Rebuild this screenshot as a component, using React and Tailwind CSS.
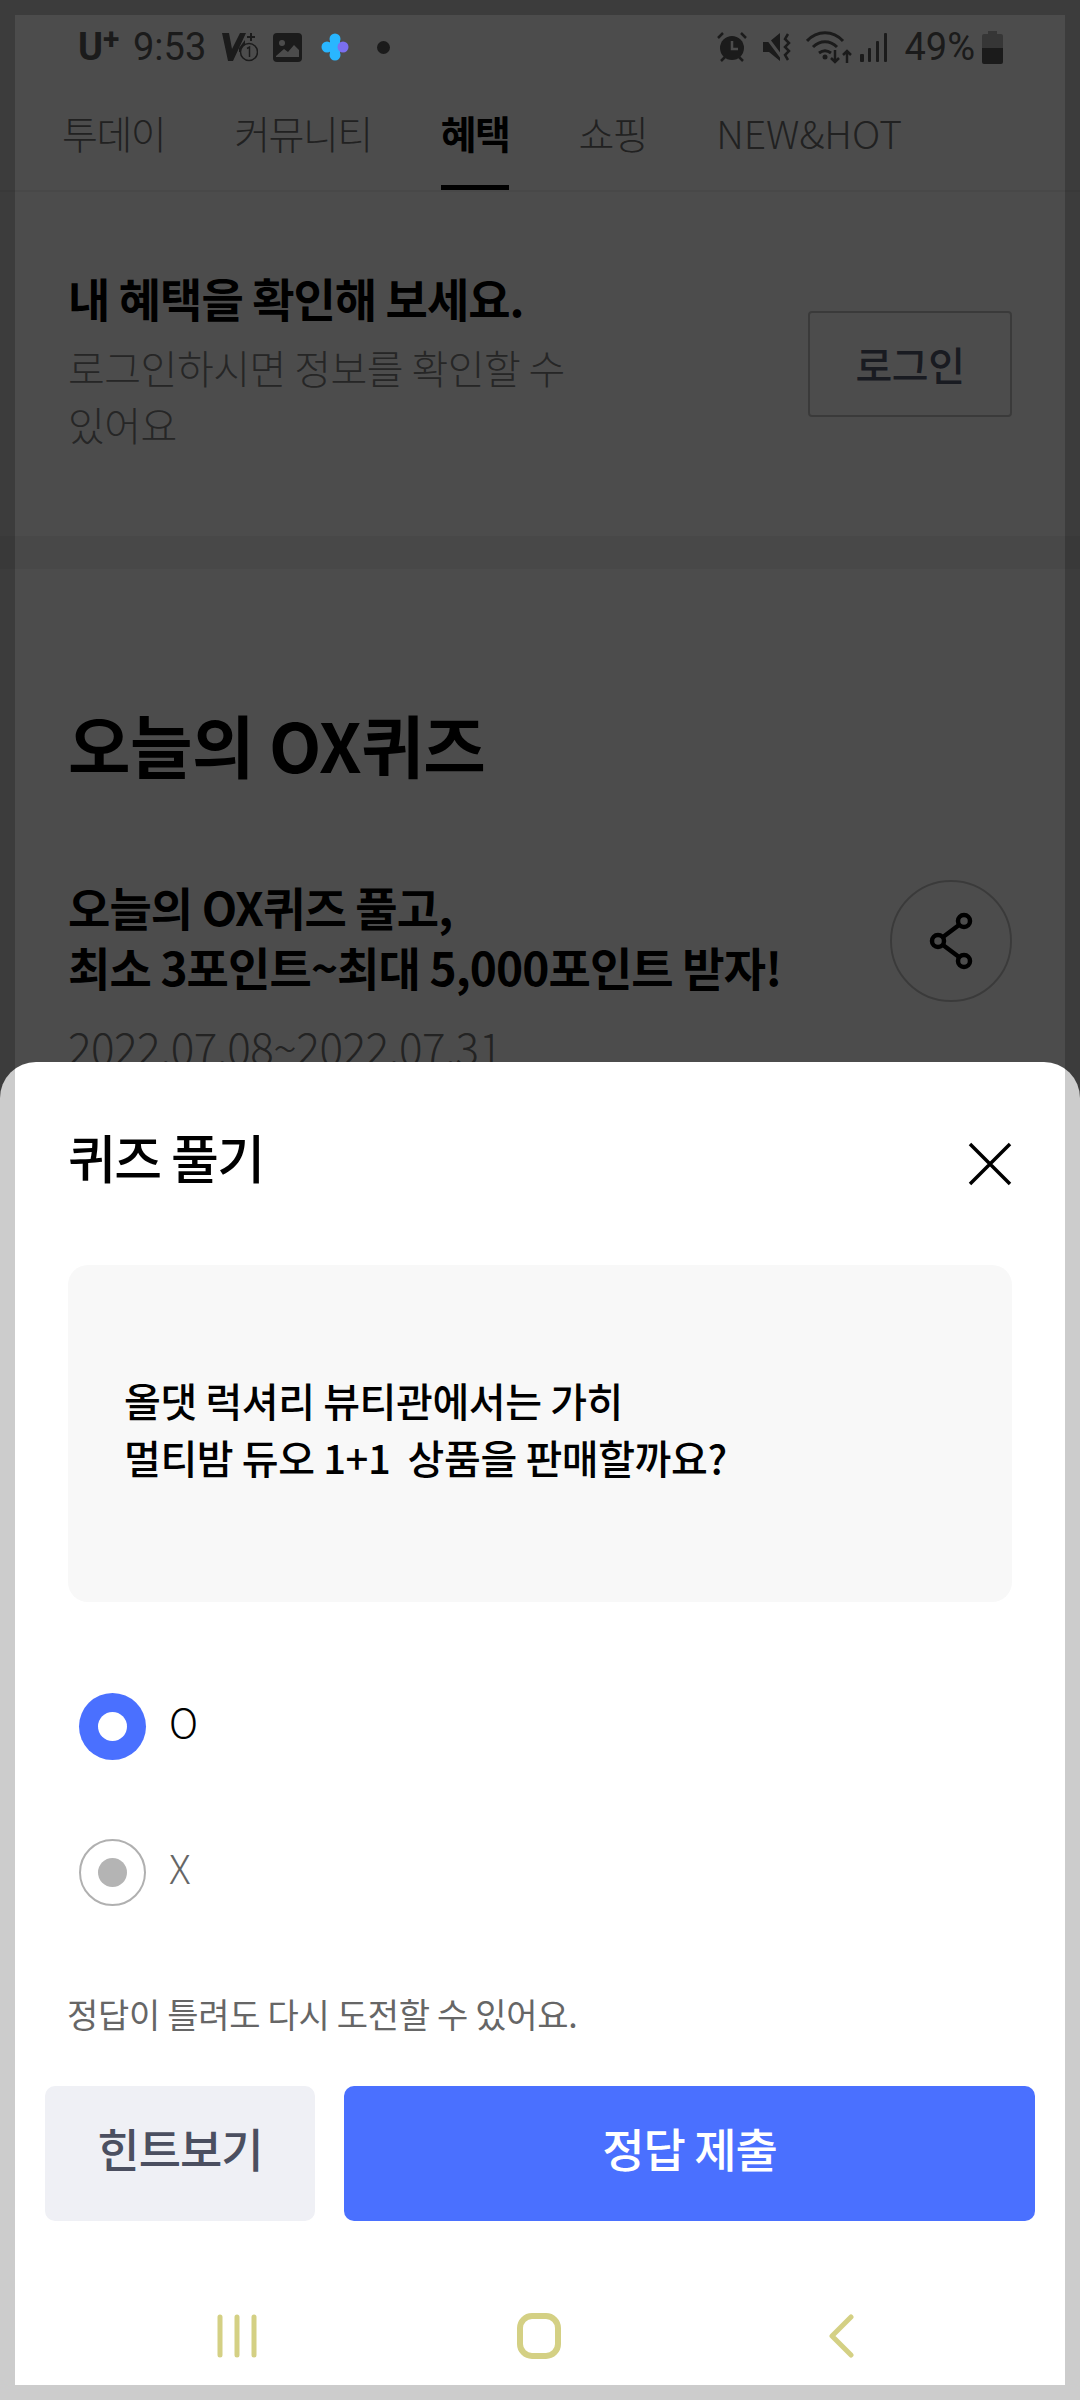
const TABS = [
  { label: "투데이" },
  { label: "커뮤니티" },
  { label: "혜택", active: true },
  { label: "쇼핑" },
  { label: "NEW&HOT", latin: true },
];

function tabClass(tab) {
  if (tab.active) return "h-[96px] pb-[15px] flex items-center border-b-[5px] border-black text-black font-bold text-[39px] tracking-[-1.5px]";
  if (tab.latin) return "h-[96px] pb-[15px] flex items-center border-b-[5px] border-transparent text-[#707070] font-light text-[39px] tracking-[-0.1px]";
  return "h-[96px] pb-[15px] flex items-center border-b-[5px] border-transparent text-[#707070] font-light text-[39px] tracking-[-1.5px]";
}

function StatusBar() {
  return (
    <div className="h-[94px] flex items-center text-[#5a5a5a] font-['Roboto',sans-serif]">
      <div className="w-[133px] pl-[78px] flex items-start font-bold text-[38px] leading-none">
        U<span className="text-[30px] leading-none -mt-[4px]">+</span>
      </div>
      <span className="w-[89px] text-[38px] leading-none">9:53</span>
      <svg className="w-[36px] h-[30px]" viewBox="0 0 36 30" fill="none">
        <path d="M0 1h7l3 16L18 1h6L11 29H6z" fill="#5a5a5a" />
        <path d="M17 16l6-8v6l-3 6h-3z" fill="#5a5a5a" />
        <path d="M29 1v8M25 5h8" stroke="#5a5a5a" strokeWidth="2" />
        <circle cx="27" cy="20" r="8.5" fill="#fff" stroke="#5a5a5a" strokeWidth="1.5" />
        <path d="M25 16.5l2.5-1.5v10" stroke="#5a5a5a" strokeWidth="1.5" />
      </svg>
      <svg className="w-[29px] h-[29px] ml-[15px]" viewBox="0 0 29 29" fill="none">
        <rect width="29" height="29" rx="4" fill="#5a5a5a" />
        <circle cx="9" cy="10" r="3" fill="#fff" />
        <path d="M3 23l8-7 4 3 6-7 5 5v7H3z" fill="#fff" />
      </svg>
      <svg className="w-[28px] h-[28px] ml-[19px] relative z-10" viewBox="0 0 28 28">
        <circle cx="14" cy="6" r="5.5" fill="#29b6ff" />
        <circle cx="14" cy="22" r="5.5" fill="#29b6ff" />
        <circle cx="6" cy="14" r="5.5" fill="#29b6ff" />
        <rect x="9" y="6" width="10" height="16" fill="#29b6ff" />
        <circle cx="22" cy="14" r="5.5" fill="#7b6ff0" />
      </svg>
      <span className="w-[13px] h-[13px] ml-[28px] rounded-full bg-[#5a5a5a]" />
      <div className="ml-auto flex items-center pr-[77px]">
        <svg className="w-[30px] h-[30px]" viewBox="0 0 30 30" fill="none">
          <circle cx="15" cy="16" r="12" fill="#5a5a5a" />
          <path d="M15 9v8h6" stroke="#fff" strokeWidth="2.5" />
          <path d="M1 6l5-5M29 6l-5-5M4 29l4-4M26 29l-4-4" stroke="#5a5a5a" strokeWidth="2.5" />
        </svg>
        <svg className="w-[30px] h-[30px] ml-[16px]" viewBox="0 0 30 30" fill="none">
          <path d="M0 10h6l11-9v28l-11-9H0z" fill="#5a5a5a" />
          <path d="M2 3l18 24" stroke="#fff" strokeWidth="3" />
          <path d="M25 2l-3 5 4 4-4 4 4 4-4 4 3 5" stroke="#5a5a5a" strokeWidth="2.5" />
        </svg>
        <svg className="w-[46px] h-[33px] ml-[13px]" viewBox="0 0 46 33" fill="none">
          <path d="M1 10C11 -1 27 -1 37 10" stroke="#5a5a5a" strokeWidth="3" />
          <path d="M7 16c7-7 17-7 24 0" stroke="#5a5a5a" strokeWidth="3" />
          <path d="M13 22c4-3 8-3 12 0" stroke="#5a5a5a" strokeWidth="3" />
          <circle cx="19" cy="26" r="2.5" fill="#5a5a5a" />
          <path d="M29 19v12m-4-4l4 4 4-4M41 32V20m-4 4l4-4 4 4" stroke="#5a5a5a" strokeWidth="2.5" />
        </svg>
        <svg className="w-[28px] h-[30px] ml-[8px]" viewBox="0 0 28 30" fill="#5a5a5a">
          <rect x="0" y="22" width="4" height="8" rx="1" />
          <rect x="8" y="16" width="3" height="14" rx="1" />
          <rect x="16" y="9" width="3" height="21" rx="1" />
          <rect x="24" y="1" width="3" height="29" rx="1" />
        </svg>
        <span className="ml-[16px] text-[38px] leading-none">49%</span>
        <svg className="w-[21px] h-[33px] ml-[7px]" viewBox="0 0 21 33">
          <path d="M6 0h9v3h4a2 2 0 0 1 2 2v12H0V5a2 2 0 0 1 2-2h4z" fill="#b4b4b4" />
          <path d="M0 17h21v14a2 2 0 0 1-2 2H2a2 2 0 0 1-2-2z" fill="#5a5a5a" />
        </svg>
      </div>
    </div>
  );
}

function Page() {
  return (
    <div className="bg-white">
      <StatusBar />
      <nav className="h-[98px] pl-[62px] flex gap-[69px] border-b-2 border-[#f0f0f0]">
        {TABS.map(tab => (
          <div key={tab.label} className={tabClass(tab)}>
            {tab.label}
          </div>
        ))}
      </nav>

      <section className="h-[344px] px-[68px] flex justify-between items-start">
        <div className="pt-[75px] w-[530px]">
          <h2 className="text-[46px] leading-[60px] font-bold text-black tracking-[-1px]">내 혜택을 확인해 보세요.</h2>
          <p className="mt-[12px] text-[40px] leading-[57px] font-light text-[#808080] tracking-[-0.5px] break-keep">
            로그인하시면 정보를 확인할 수 있어요
          </p>
        </div>
        <button className="mt-[119px] w-[204px] h-[106px] border-2 border-[#c4c4c4] rounded-[4px] text-[40px] font-medium text-[#565a70] tracking-[-0.5px]">
          로그인
        </button>
      </section>
      <div className="h-[33px] bg-[#f0f0f0]" />

      <section className="px-[68px] pt-[130px]">
        <h1 className="text-[68px] leading-[90px] font-bold text-black tracking-[-0.5px]">오늘의 OX퀴즈</h1>
        <div className="mt-[87px] flex justify-between items-start">
          <div>
            <p className="text-[46px] leading-[60px] font-bold text-black tracking-[-0.9px]">
              오늘의 OX퀴즈 풀고,<br />최소 3포인트~최대 5,000포인트 받자!
            </p>
            <p className="mt-[20px] text-[44px] leading-[60px] font-light text-[#757575] tracking-[-0.5px]">
              2022.07.08~2022.07.31
            </p>
          </div>
          <div className="mt-[4px] w-[122px] h-[122px] rounded-full border-2 border-[#c4c4c4] flex items-center justify-center">
            <svg className="w-[50px] h-[60px]" viewBox="0 0 50 60" fill="none" stroke="#000" strokeWidth="4.5">
              <circle cx="12" cy="30" r="6" />
              <circle cx="38" cy="10" r="6" />
              <circle cx="38" cy="50" r="6" />
              <path d="M17 26l16-12M17 34l16 12" />
            </svg>
          </div>
        </div>
      </section>
    </div>
  );
}

function Radio({ label, selected }) {
  return (
    <label className="ml-[11px] flex items-center gap-[23px] h-[67px]">
      {selected ? (
        <span className="w-[67px] h-[67px] rounded-full bg-[#4a70ff] flex items-center justify-center">
          <span className="w-[29px] h-[29px] rounded-full bg-white" />
        </span>
      ) : (
        <span className="w-[67px] h-[67px] rounded-full border-2 border-[#b0b0b0] flex items-center justify-center">
          <span className="w-[29px] h-[29px] rounded-full bg-[#b4b4b4]" />
        </span>
      )}
      <span className={selected ? "text-[40px] -mt-[12px] text-black font-light" : "text-[40px] -mt-[12px] text-[#666] font-light"}>
        {label}
      </span>
    </label>
  );
}

function QuizSheet() {
  return (
    <div className="absolute z-20 inset-x-0 top-[1062px] bottom-0 bg-white rounded-t-[36px]">
      <div className="mx-[68px] pt-[60px] flex justify-between items-center">
        <h3 className="text-[52px] leading-[70px] font-medium text-black tracking-[-1.5px]">퀴즈 풀기</h3>
        <svg className="w-[44px] h-[44px] mt-[14px]" viewBox="0 0 44 44" fill="none" stroke="#000" strokeWidth="3.5">
          <path d="M2 2l40 40M42 2L2 42" />
        </svg>
      </div>

      <div className="mx-[68px] mt-[73px] h-[337px] pl-[56px] pb-[10px] flex items-center bg-[#f8f8f8] rounded-[20px]">
        <p className="text-[40px] leading-[57px] font-medium text-black tracking-[-0.4px] whitespace-pre-wrap">
          {"올댓 럭셔리 뷰티관에서는 가히\n멀티밤 듀오 1+1  상품을 판매할까요?"}
        </p>
      </div>

      <div className="mx-[68px] mt-[91px] flex flex-col gap-[79px]">
        <Radio label="O" selected />
        <Radio label="X" />
      </div>

      <p className="mx-[67px] mt-[83px] text-[34px] leading-[50px] text-[#666] tracking-[-0.3px]">
        정답이 틀려도 다시 도전할 수 있어요.
      </p>

      <div className="mx-[45px] mt-[47px] flex gap-[29px]">
        <button className="w-[270px] h-[135px] pb-[12px] rounded-[10px] bg-[#eff0f5] text-[#4b4f60] text-[46px] font-medium tracking-[-1px]">
          힌트보기
        </button>
        <button className="flex-1 h-[135px] pb-[12px] rounded-[10px] bg-[#4a70ff] text-white text-[46px] font-medium tracking-[-1px]">
          정답 제출
        </button>
      </div>

      <div className="mt-[92px] ml-[86px] w-[906px] grid grid-cols-3 justify-items-center items-center">
        <svg className="w-[42px] h-[44px]" viewBox="0 0 42 44" fill="none" stroke="#d4d084" strokeWidth="5" strokeLinecap="round">
          <path d="M4 3v38M21 3v38M38 3v38" />
        </svg>
        <svg className="w-[44px] h-[46px]" viewBox="0 0 44 46" fill="none" stroke="#d4d084" strokeWidth="6">
          <rect x="3" y="3" width="38" height="40" rx="12" />
        </svg>
        <svg className="w-[28px] h-[44px]" viewBox="0 0 28 44" fill="none" stroke="#d4d084" strokeWidth="5" strokeLinecap="round" strokeLinejoin="round">
          <path d="M24 3L5 22l19 19" />
        </svg>
      </div>
    </div>
  );
}

export default function App() {
  return (
    <div className="relative w-[1080px] h-[2400px] overflow-hidden font-['Noto_Sans_CJK_KR',sans-serif]">
      <Page />
      <div className="absolute inset-0 bg-black/70" />
      <QuizSheet />
      <div className="absolute z-30 inset-0 border-[15px] border-black/20 pointer-events-none" />
    </div>
  );
}
